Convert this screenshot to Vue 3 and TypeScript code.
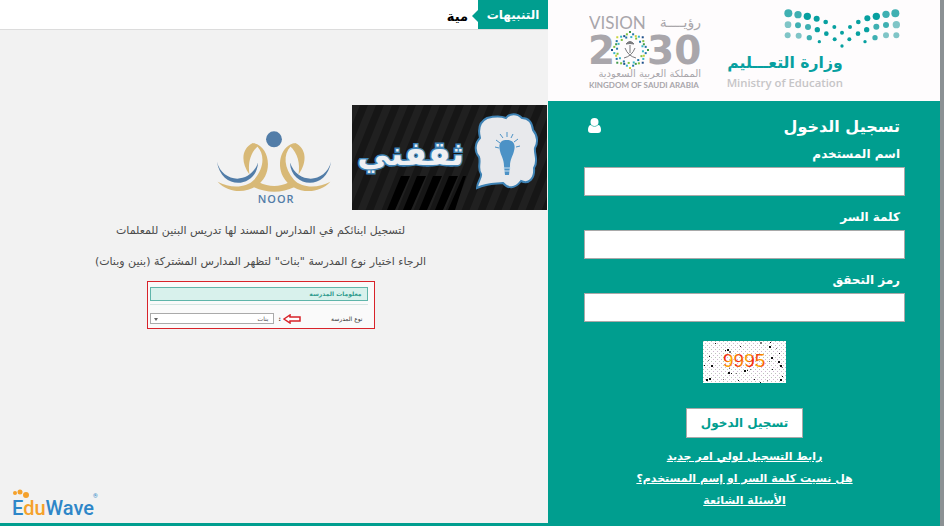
<script setup lang="ts">
import { ref } from 'vue'

interface Field {
  id: string
  label: string
  type: string
}

interface Dot {
  x: number
  y: number
  r: number
  color: string
}

const fields: Field[] = [
  { id: 'username', label: 'اسم المستخدم', type: 'text' },
  { id: 'password', label: 'كلمة السر', type: 'password' },
  { id: 'code', label: 'رمز التحقق', type: 'text' },
]
const values = ref<Record<string, string>>({ username: '', password: '', code: '' })

const links: string[] = ['رابط التسجيل لولي امر جديد', 'هل نسيت كلمة السر او إسم المستخدم؟', 'الأسئلة الشائعة']

const strong = '#07a0a0'
const mid = '#3fb0b2'
const soft = '#80c5c7'
const ministryDots: Dot[] = (
  [
    [223, 40, 12, mid], [252, 44, 11, mid], [280, 49, 11, strong], [308, 56, 9, strong], [335, 66, 7, strong],
    [361, 81, 6, strong], [384, 98, 6, strong], [408, 81, 6, strong], [433, 66, 7, strong], [460, 55, 9, strong],
    [487, 49, 11, strong], [516, 43, 11, mid], [544, 40, 12, mid],
    [222, 74, 10, soft], [252, 76, 9, mid], [282, 81, 9, mid], [310, 89, 8, strong], [337, 101, 7, strong],
    [362, 118, 6, strong], [384, 138, 5, strong], [406, 118, 6, strong], [432, 101, 7, strong], [458, 89, 8, strong],
    [487, 80, 9, mid], [516, 75, 9, mid], [547, 74, 11, soft],
    [221, 106, 9, soft], [254, 107, 9, soft], [286, 113, 8, mid], [316, 125, 5, strong], [453, 125, 5, strong],
    [483, 113, 8, mid], [516, 106, 9, soft], [547, 106, 9, soft],
  ] as [number, number, number, string][]
).map(([x, y, r, color]) => ({ x, y, r, color }))

// Star-shaped wreath of small squares around the emblem
const wreathColors = ['#3f9a4a', '#2377a8', '#c9d43c', '#39b5c4', '#1d4f8a', '#7fc241']
const wreath: Dot[] = []
for (let i = 0; i < 32; i++) {
  const a = (i / 32) * Math.PI * 2
  const tip = i % 4 === 0 ? 18 : i % 2 === 0 ? 15 : 16
  wreath.push({ x: 41 + Math.cos(a) * tip, y: 38 + Math.sin(a) * tip, r: 2, color: wreathColors[i % 6] })
  if (i % 2 === 0) {
    wreath.push({ x: 41 + Math.cos(a + 0.1) * 13, y: 38 + Math.sin(a + 0.1) * 13, r: 2, color: wreathColors[(i + 3) % 6] })
  }
}

const specks: Dot[] = (
  [
    [24, 8, 2], [26, 10, 2], [22, 9, 1], [37, 5, 1], [57, 1, 2], [66, 5, 2], [67, 1, 1], [73, 7, 1], [12, 2, 1],
    [6, 15, 1], [5, 19, 1], [8, 24, 2], [1, 24, 1], [26, 27, 1], [25, 31, 2], [28, 32, 1], [33, 32, 1], [41, 29, 2],
    [44, 29, 1], [47, 28, 1], [3, 38, 2], [6, 37, 2], [20, 38, 1], [51, 38, 1], [57, 41, 1], [64, 39, 1], [77, 38, 2],
    [68, 16, 2], [66, 20, 1], [75, 20, 2], [77, 24, 2], [79, 26, 1], [76, 12, 1], [69, 28, 1], [49, 24, 1],
    [79, 35, 1], [35, 39, 1], [60, 13, 1],
  ] as [number, number, number][]
).map(([x, y, r], i) => ({ x, y, r, color: i % 3 === 1 ? '#777' : '#111' }))
</script>

<template>
  <div class="page" dir="rtl">
    <aside class="login">
      <header class="brands">
        <svg class="ministry" viewBox="36 18 534 258" role="img" aria-label="وزارة التعليم">
          <circle v-for="(d, i) in ministryDots" :key="i" :cx="d.x" :cy="d.y" :r="d.r" :fill="d.color" />
          <text x="386" y="204" class="ministry-ar">وزارة التعـــليم</text>
          <text x="38" y="261" class="ministry-en">Ministry of Education</text>
        </svg>
        <svg class="vision" viewBox="0 0 116 78" role="img" aria-label="Vision 2030">
          <text x="0" y="17" class="vision-en">VISION</text>
          <text x="112" y="15" class="vision-ar">رؤيــــة</text>
          <text x="-1" y="52" class="vision-year">2</text>
          <text x="58" y="52" class="vision-year">30</text>
          <rect
            v-for="(d, i) in wreath"
            :key="i"
            :x="d.x - d.r / 2"
            :y="d.y - d.r / 2"
            :width="d.r"
            :height="d.r"
            :fill="d.color"
          />
          <g stroke="#77777b" stroke-width="1" fill="none">
            <path d="M35 46 Q43 44 46 36 M47 46 Q39 44 36 36 M41 33 V41" />
            <path d="M37 32 Q41 27 45 32 Q41 31 37 32 Z" fill="#77777b" />
          </g>
          <text x="112" y="65" class="vision-sub-ar">المملكة العربية السعودية</text>
          <text x="0" y="76" class="vision-sub">KINGDOM OF SAUDI ARABIA</text>
        </svg>
      </header>

      <form class="form" @submit.prevent>
        <div class="title-row">
          <h1>تسجيل الدخول</h1>
          <svg class="user" viewBox="0 0 13 15" aria-hidden="true">
            <path
              d="M3 7 C1 7 0 9 0 12 C0 14 1 15 3 15 H10 C12 15 13 14 13 12 C13 9 12 7 10 7 C9 8 8 8.500 6.500 8.500 C5 8.500 4 8 3 7 Z"
            />
            <ellipse cx="6.5" cy="4" rx="4" ry="4" />
          </svg>
        </div>
        <div v-for="f in fields" :key="f.id" class="field">
          <label :for="f.id">{{ f.label }}</label>
          <input :id="f.id" v-model="values[f.id]" :type="f.type" />
        </div>
        <svg class="captcha" viewBox="0 0 83 42" role="img" aria-label="9995">
          <defs>
            <pattern id="grain" width="4" height="4" patternUnits="userSpaceOnUse">
              <rect x="0" y="0" width="1" height="1" fill="#bcc4bc" />
              <rect x="2" y="2" width="1" height="1" fill="#cdb8d0" />
            </pattern>
            <linearGradient id="ink" x1="0" y1="0" x2="6" y2="3" gradientUnits="userSpaceOnUse" spreadMethod="reflect">
              <stop offset="0" stop-color="#f02010" />
              <stop offset="1" stop-color="#ffb400" />
            </linearGradient>
          </defs>
          <rect width="83" height="42" fill="#fff" />
          <rect width="83" height="42" fill="url(#grain)" />
          <rect v-for="(d, i) in specks" :key="i" :x="d.x" :y="d.y" :width="d.r" :height="d.r" :fill="d.color" />
          <text x="20" y="26" class="captcha-text" fill="url(#ink)">9995</text>
        </svg>
        <button type="submit" class="submit">تسجيل الدخول</button>
        <nav class="links">
          <a v-for="l in links" :key="l" href="#">{{ l }}</a>
        </nav>
      </form>
    </aside>

    <main class="content">
      <div class="ticker">
        <strong class="tag">التنبيهات</strong>
        <span class="news">مية</span>
      </div>

      <section class="slide">
        <div class="logos">
          <svg class="thaqafni" viewBox="0 0 195 105" role="img" aria-label="ثقفني">
            <defs>
              <pattern id="stripes" width="16" height="16" patternUnits="userSpaceOnUse" patternTransform="skewX(-22)">
                <rect width="16" height="16" fill="#161616" />
                <rect width="8" height="16" fill="#202020" />
              </pattern>
            </defs>
            <rect width="195" height="105" fill="url(#stripes)" />
            <path
              d="M49 71 h9 L43 105 h-8 Z M65 71 h9 L59 105 h-8 Z M81 71 h9 L75 105 h-8 Z M97 71 h9 L91 105 h-8 Z M111 71 h3 L103 105 h-7 Z"
              fill="#000"
            />
            <text x="112" y="60" class="thaqafni-text">ثقفني</text>
            <path
              d="M135 13 C143 11 149 11 154 13 C158 8 165 8 170 13 C177 13 180 17 181 25 C186 31 186 38 183 43 C182 49 187 56 182 63 C183 73 177 80 169 76 C163 84 156 84 151 78 C143 79 136 78 125 83 C125 77 130 73 129 69 C125 64 129 57 127 52 C122 46 123 38 128 33 C126 25 127 17 135 13 Z"
              fill="#e8e9ec"
              stroke="#3e82b4"
              stroke-width="2"
            />
            <path
              d="M148 46 C146 38 149 35 155 35 C161 35 164 39 162 46 C161 51 158 54 158 61 L157 70 H153 L152 61 C152 54 149 51 148 46 Z"
              fill="#4c92c6"
            />
            <path
              d="M143 42 L147 43 M144 35 L148 38 M148 29 L151 33 M155 27 V32 M161 29 L159 33 M166 34 L162 37 M168 41 L164 42"
              stroke="#4c92c6"
              stroke-width="1"
            />
            <path d="M151 63 H159 M152 66 H158" stroke="#cfe2f0" stroke-width="1" />
          </svg>
          <svg class="noor" viewBox="48 30 348 226" role="img" aria-label="NOOR">
            <g fill="#d8b977">
              <path d="M158 69 C200 75 215 130 195 170 C170 218 95 232 52 186 C90 207 140 205 162 180 C192 145 195 105 172 80 Z" />
              <path d="M286 69 C244 75 229 130 249 170 C274 218 349 232 392 186 C354 207 304 205 282 180 C252 145 249 105 272 80 Z" />
              <path d="M158 69 C125 85 120 125 148 164 C143 130 150 100 174 78 Z" />
              <path d="M286 69 C319 85 324 125 296 164 C301 130 294 100 270 78 Z" />
              <path d="M178 188 C205 202 240 202 266 188 L284 202 C245 221 200 221 160 202 Z" />
            </g>
            <g fill="#527da8">
              <circle cx="222" cy="58" r="24" />
              <path d="M50 126 C66 190 150 196 174 128 C170 205 64 215 50 126 Z" />
              <path d="M394 126 C378 190 294 196 270 128 C274 205 380 215 394 126 Z" />
            </g>
            <text x="173" y="249" class="noor-text">NOOR</text>
          </svg>
        </div>

        <div class="notice">
          <p>لتسجيل ابنائكم في المدارس المسند لها تدريس البنين للمعلمات</p>
          <p>الرجاء اختيار نوع المدرسة "بنات" لتظهر المدارس المشتركة (بنين وبنات)</p>
          <div class="sample">
            <div class="sample-title">معلومات المدرسة</div>
            <div class="sample-row">
              <label for="school">نوع المدرسة</label>
              <svg class="arrow" viewBox="0 0 18 10" aria-hidden="true">
                <path d="M1 5 L7 1 V3 H17 V7 H7 V9 Z" fill="#fff" stroke="#d8232a" stroke-width="1.500" />
              </svg>
              <span class="colon">:</span>
              <div class="picker">
                <select id="school">
                  <option>بنات</option>
                </select>
              </div>
            </div>
          </div>
        </div>
      </section>

      <footer class="footer">
        <svg class="eduwave" viewBox="0 0 88 30" role="img" aria-label="EduWave">
          <g fill="#f5a12b">
            <circle cx="3" cy="4" r="2" />
            <circle cx="8" cy="3" r="2.500" />
            <circle cx="14" cy="6" r="3" />
          </g>
          <text x="0" y="26" class="edu-text">E<tspan fill="#f5a12b">du</tspan>Wave</text>
          <text x="81" y="9" class="edu-mark">®</text>
        </svg>
      </footer>
    </main>
  </div>
</template>

<style>
body {
  margin: 0;
}
</style>

<style scoped>
* {
  box-sizing: border-box;
}
.page {
  display: grid;
  grid-template-columns: 99fr 137fr;
  min-height: 100vh;
  font-family: 'DejaVu Sans', 'Noto Sans', sans-serif;
  background: #f2f2f2;
}
.login {
  display: flex;
  flex-direction: column;
  border-right: 4px solid #8b9194;
  background: #009e8f;
}
.brands {
  display: flex;
  justify-content: space-between;
  padding: 6px 36px 9px 41px;
  background: #fefcfd;
}
.ministry {
  width: 178px;
  height: 86px;
}
.vision {
  width: 116px;
  height: 78px;
  margin-top: 6px;
}
.ministry-ar,
.vision-ar,
.vision-sub-ar,
.thaqafni-text {
  direction: rtl;
}
.ministry-en,
.vision-en,
.vision-year,
.vision-sub,
.captcha-text,
.noor-text,
.edu-text,
.edu-mark {
  direction: ltr;
}
.ministry-ar {
  font-size: 47px;
  font-weight: bold;
  fill: #07a0a0;
}
.ministry-en {
  font: 600 34px 'Open Sans', sans-serif;
  fill: #c6c5c7;
}
.vision-en {
  font: 400 17px Lato, sans-serif;
  fill: #a9a6ab;
}
.vision-ar {
  font-size: 14px;
  fill: #a9a6ab;
}
.vision-year {
  font-size: 39px;
  font-weight: bold;
  fill: #a9a6ab;
}
.vision-sub-ar {
  font-size: 10px;
  fill: #a9a6ab;
}
.vision-sub {
  font: 700 8px Lato, sans-serif;
  fill: #a9a6ab;
}
.form {
  display: flex;
  flex-direction: column;
  align-items: center;
  padding: 12px 35px 12px 36px;
}
.title-row {
  display: flex;
  justify-content: space-between;
  align-items: flex-start;
  width: 100%;
  height: 28px;
  padding: 0 5px 0 4px;
}
h1 {
  margin: 0;
  font-size: 16px;
  line-height: 28px;
  color: #fff;
}
.user {
  width: 13px;
  height: 15px;
  margin-top: 5px;
  fill: #fff;
}
.field {
  width: 100%;
  margin-bottom: 8px;
}
.field label {
  display: block;
  height: 26px;
  padding: 0 5px;
  font-size: 12px;
  font-weight: bold;
  line-height: 26px;
  color: #fff;
}
.field input {
  display: block;
  width: 100%;
  height: 29px;
  padding: 0 8px;
  border: 1px solid #a9a9a9;
  background: #fff;
}
.captcha {
  width: 83px;
  height: 42px;
  margin-top: 11px;
}
.captcha-text {
  font: 19px 'Liberation Sans', sans-serif;
}
.submit {
  height: 30px;
  margin-top: 25px;
  padding: 0 14px;
  border: 1px solid #a9a9a9;
  font: bold 12px 'DejaVu Sans', sans-serif;
  color: #009e8f;
  background: #fff;
}
.links {
  display: flex;
  flex-direction: column;
  align-items: center;
  margin-top: 8px;
}
.links a {
  font-size: 11px;
  font-weight: bold;
  line-height: 22px;
  color: #fff;
}
.content {
  display: flex;
  flex-direction: column;
  border-bottom: 3px solid #009e8f;
}
.ticker {
  display: flex;
  align-items: center;
  height: 30px;
  border-bottom: 1px solid #dcdcdc;
  background: #fff;
}
.tag {
  position: relative;
  width: 70px;
  height: 29px;
  font-size: 12px;
  line-height: 30px;
  text-align: center;
  color: #fff;
  background: #009e8f;
}
.tag::before {
  content: '';
  position: absolute;
  top: 10px;
  left: -6px;
  border-top: 6px solid transparent;
  border-bottom: 6px solid transparent;
  border-right: 6px solid #009e8f;
}
.news {
  margin-right: 10px;
  padding-top: 4px;
  font-size: 13px;
  font-weight: bold;
  color: #000;
}
.slide {
  flex: 1;
  padding-top: 75px;
}
.logos {
  display: flex;
  gap: 20px;
  padding-right: 1px;
}
.thaqafni {
  width: 195px;
  height: 105px;
}
.thaqafni-text {
  font-size: 33px;
  font-weight: bold;
  fill: #eef0f3;
  stroke: #3e82b4;
  stroke-width: 3px;
  paint-order: stroke;
}
.noor {
  width: 116px;
  height: 75px;
  margin-top: 25px;
}
.noor-text {
  font: 600 33px 'Open Sans', sans-serif;
  letter-spacing: 3px;
  fill: #527da8;
}
.notice {
  display: flex;
  flex-direction: column;
  align-items: center;
  padding: 5px 27px 0 0;
}
.notice p {
  margin: 0;
  font-size: 11px;
  line-height: 31px;
  white-space: nowrap;
  color: #4a4a4a;
}
.sample {
  width: 228px;
  height: 48px;
  margin-top: 4px;
  padding: 5px 6px 0 2px;
  border: 1px solid #d8232a;
  background: #fafafa;
}
.sample-title {
  height: 14px;
  padding: 0 5px;
  border: 1px solid #5fb5aa;
  font-size: 6px;
  font-weight: bold;
  line-height: 12px;
  color: #2f9a8c;
  background: #d8f1ec;
}
.sample-row {
  display: flex;
  align-items: center;
  margin-top: 3px;
  padding: 8px 5px 0 0;
  border-top: 1px solid #d5e6e3;
  font-size: 6px;
  color: #333;
}
.sample-row label {
  flex: 1;
}
.arrow {
  width: 18px;
  height: 10px;
  margin-left: 2px;
}
.colon {
  font-weight: bold;
}
.picker {
  position: relative;
  margin-right: 5px;
}
.picker::after {
  content: '';
  position: absolute;
  top: 5px;
  left: 4px;
  border-top: 3px solid #666;
  border-left: 2px solid transparent;
  border-right: 2px solid transparent;
}
.picker select {
  display: block;
  width: 124px;
  height: 11px;
  padding: 0 4px;
  border: 1px solid #aaa;
  border-radius: 0;
  appearance: none;
  font: 6px 'DejaVu Sans', sans-serif;
  color: #555;
  background: #fff;
}
.footer {
  display: flex;
  justify-content: flex-end;
  padding: 0 0 4px 12px;
}
.eduwave {
  width: 88px;
  height: 30px;
}
.edu-text {
  font: 500 20px Roboto, sans-serif;
  fill: #2e86c8;
}
.edu-mark {
  font: 6px Roboto, sans-serif;
  fill: #2e86c8;
}
</style>
